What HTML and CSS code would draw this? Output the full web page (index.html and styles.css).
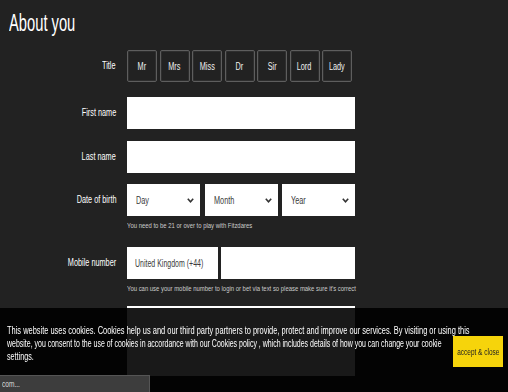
FILE: index.html
```html
<!DOCTYPE html>
<html>
<head>
<meta charset="utf-8">
<link rel="stylesheet" href="styles.css">
</head>
<body>
<div class="page">
  <h1 class="heading"><span class="nx-l">About you</span></h1>
  <div class="form">
    <div class="row row-title">
      <div class="label"><span class="nx-r">Title</span></div>
      <div class="field titles">
        <button class="tbtn"><span class="nx-c">Mr</span></button>
        <button class="tbtn"><span class="nx-c">Mrs</span></button>
        <button class="tbtn"><span class="nx-c">Miss</span></button>
        <button class="tbtn"><span class="nx-c">Dr</span></button>
        <button class="tbtn"><span class="nx-c">Sir</span></button>
        <button class="tbtn"><span class="nx-c">Lord</span></button>
        <button class="tbtn"><span class="nx-c">Lady</span></button>
      </div>
    </div>
    <div class="row row-first">
      <div class="label"><span class="nx-r">First name</span></div>
      <div class="field"><div class="input"></div></div>
    </div>
    <div class="row row-last">
      <div class="label"><span class="nx-r">Last name</span></div>
      <div class="field"><div class="input"></div></div>
    </div>
    <div class="row row-dob">
      <div class="label"><span class="nx-r">Date of birth</span></div>
      <div class="field">
        <div class="selects">
          <div class="select s-day"><span class="nx-l">Day</span><svg class="chev" width="7" height="5" viewBox="0 0 7 5"><path d="M0.8 0.8 L3.5 3.8 L6.2 0.8" fill="none" stroke="#333" stroke-width="1.6"/></svg></div>
          <div class="select s-month"><span class="nx-l">Month</span><svg class="chev" width="7" height="5" viewBox="0 0 7 5"><path d="M0.8 0.8 L3.5 3.8 L6.2 0.8" fill="none" stroke="#333" stroke-width="1.6"/></svg></div>
          <div class="select s-year"><span class="nx-l">Year</span><svg class="chev" width="7" height="5" viewBox="0 0 7 5"><path d="M0.8 0.8 L3.5 3.8 L6.2 0.8" fill="none" stroke="#333" stroke-width="1.6"/></svg></div>
        </div>
        <div class="note"><span class="nx-l">You need to be 21 or over to play with Fitzdares</span></div>
      </div>
    </div>
    <div class="row row-mobile">
      <div class="label"><span class="nx-r">Mobile number</span></div>
      <div class="field">
        <div class="mobile">
          <div class="select s-country"><span class="nx-l">United Kingdom (+44)</span><svg class="chev" width="7" height="5" viewBox="0 0 7 5"><path d="M0.8 0.8 L3.5 3.8 L6.2 0.8" fill="none" stroke="#333" stroke-width="1.6"/></svg></div>
          <div class="input input-phone"></div>
        </div>
        <div class="note"><span class="nx-l">You can use your mobile number to login or bet via text so please make sure it's correct</span></div>
      </div>
    </div>
    <div class="row row-next">
      <div class="label"></div>
      <div class="field"><div class="input input-tall"></div></div>
    </div>
  </div>
</div>
<div class="cookie">
  <div class="cookie-body">
    <div class="cline cline-1">This website uses cookies. Cookies help us and our third party partners to provide, protect and improve our services. By visiting or using this</div>
    <div class="cline cline-2">website, you consent to the use of cookies in accordance with our Cookies policy , which includes details of how you can change your cookie</div>
    <div class="cline cline-3">settings.</div>
  </div>
  <button class="accept"><span class="nx-c">accept &amp; close</span></button>
</div>
<div class="status"><span class="nx-l">com...</span></div>
</body>
</html>
```
FILE: styles.css
```css
* { box-sizing: border-box; }
html, body { margin: 0; padding: 0; }
body {
  background: #222222;
  color: #ffffff;
  font-family: "Liberation Sans", Arial, sans-serif;
  width: 508px;
  height: 392px;
  overflow: hidden;
}
.nx-l, .nx-r, .nx-c {
  display: inline-block;
  white-space: nowrap;
  transform: scaleX(0.73);
}
.nx-l { transform-origin: left center; }
.nx-r { transform-origin: right center; }
.nx-c { transform-origin: center center; }
.page { padding: 8px 0 0 9px; }
.heading {
  margin: 0;
  font-size: 23px;
  font-weight: normal;
  line-height: 30px;
}
.heading .nx-l { transform: scaleX(0.64); }
.form { margin-top: 12px; }
.row {
  display: grid;
  grid-template-columns: 107px 228px;
  column-gap: 11px;
  align-items: start;
}
.label {
  font-size: 10px;
  text-align: right;
  line-height: 32px;
  color: #ffffff;
}
.titles {
  display: grid;
  grid-template-columns: repeat(7, 1fr);
  gap: 2.5px;
  width: 225px;
}
.tbtn {
  height: 32px;
  background: #222;
  border: 1px solid #5e5e5e;
  border-radius: 2px;
  box-shadow: inset 0 0 0 1px #2e2e2e;
  color: #f0f0f0;
  font-family: inherit;
  font-size: 10px;
  padding: 0;
  display: flex;
  align-items: center;
  justify-content: center;
}
.row-first { margin-top: 15px; }
.row-last { margin-top: 12px; }
.row-dob { margin-top: 11px; }
.row-mobile { margin-top: 16px; }
.row-next { margin-top: 12px; }
.input {
  height: 32px;
  background: #ffffff;
}
.input-tall { height: 70px; }
.selects {
  display: grid;
  grid-template-columns: 73px 73px 73px;
  column-gap: 4.5px;
}
.select {
  height: 32px;
  background: #fff;
  color: #3a3a3a;
  display: flex;
  align-items: center;
  justify-content: space-between;
  padding: 0 6px 0 9px;
  font-size: 10px;
}
.chev { flex: none; display: block; }
.mobile { display: flex; gap: 3px; }
.s-country { width: 91px; flex: none; padding-left: 8px; }
.s-country .nx-l { transform: scaleX(0.7); }
.input-phone { flex: 1; }
.note {
  font-size: 8px;
  color: #cccccc;
  margin-top: 5px;
  line-height: 10px;
}
.note .nx-l { transform: scaleX(0.74); }
.cookie {
  position: fixed;
  left: 0;
  right: 0;
  bottom: 0;
  height: 84px;
  background: rgba(0, 0, 0, 0.9);
  display: flex;
  align-items: flex-start;
  justify-content: space-between;
  padding: 16px 5px 0 7px;
}
.cookie-body {
  flex: none;
  width: 434px;
  font-size: 10px;
  line-height: 13px;
  color: #fff;
}
.cline {
  white-space: nowrap;
  transform-origin: left top;
}
.cline-1 { transform: scaleX(0.745); }
.cline-2 { transform: scaleX(0.698); }
.cline-3 { transform: scaleX(0.72); }
.accept {
  flex: none;
  margin-top: 12px;
  width: 50px;
  height: 31px;
  background: #f6d40b;
  border: none;
  color: #222;
  font-family: inherit;
  font-size: 9px;
  padding: 0;
  display: flex;
  align-items: center;
  justify-content: center;
}
.accept .nx-c { transform: scaleX(0.72); }
.status {
  position: fixed;
  left: 0;
  bottom: 0;
  width: 150px;
  height: 17px;
  background: #3d3d3d;
  border-top: 1px solid #555;
  border-right: 1px solid #555;
  color: #ddd;
  font-size: 9px;
  line-height: 16px;
  padding-left: 2px;
}
```
